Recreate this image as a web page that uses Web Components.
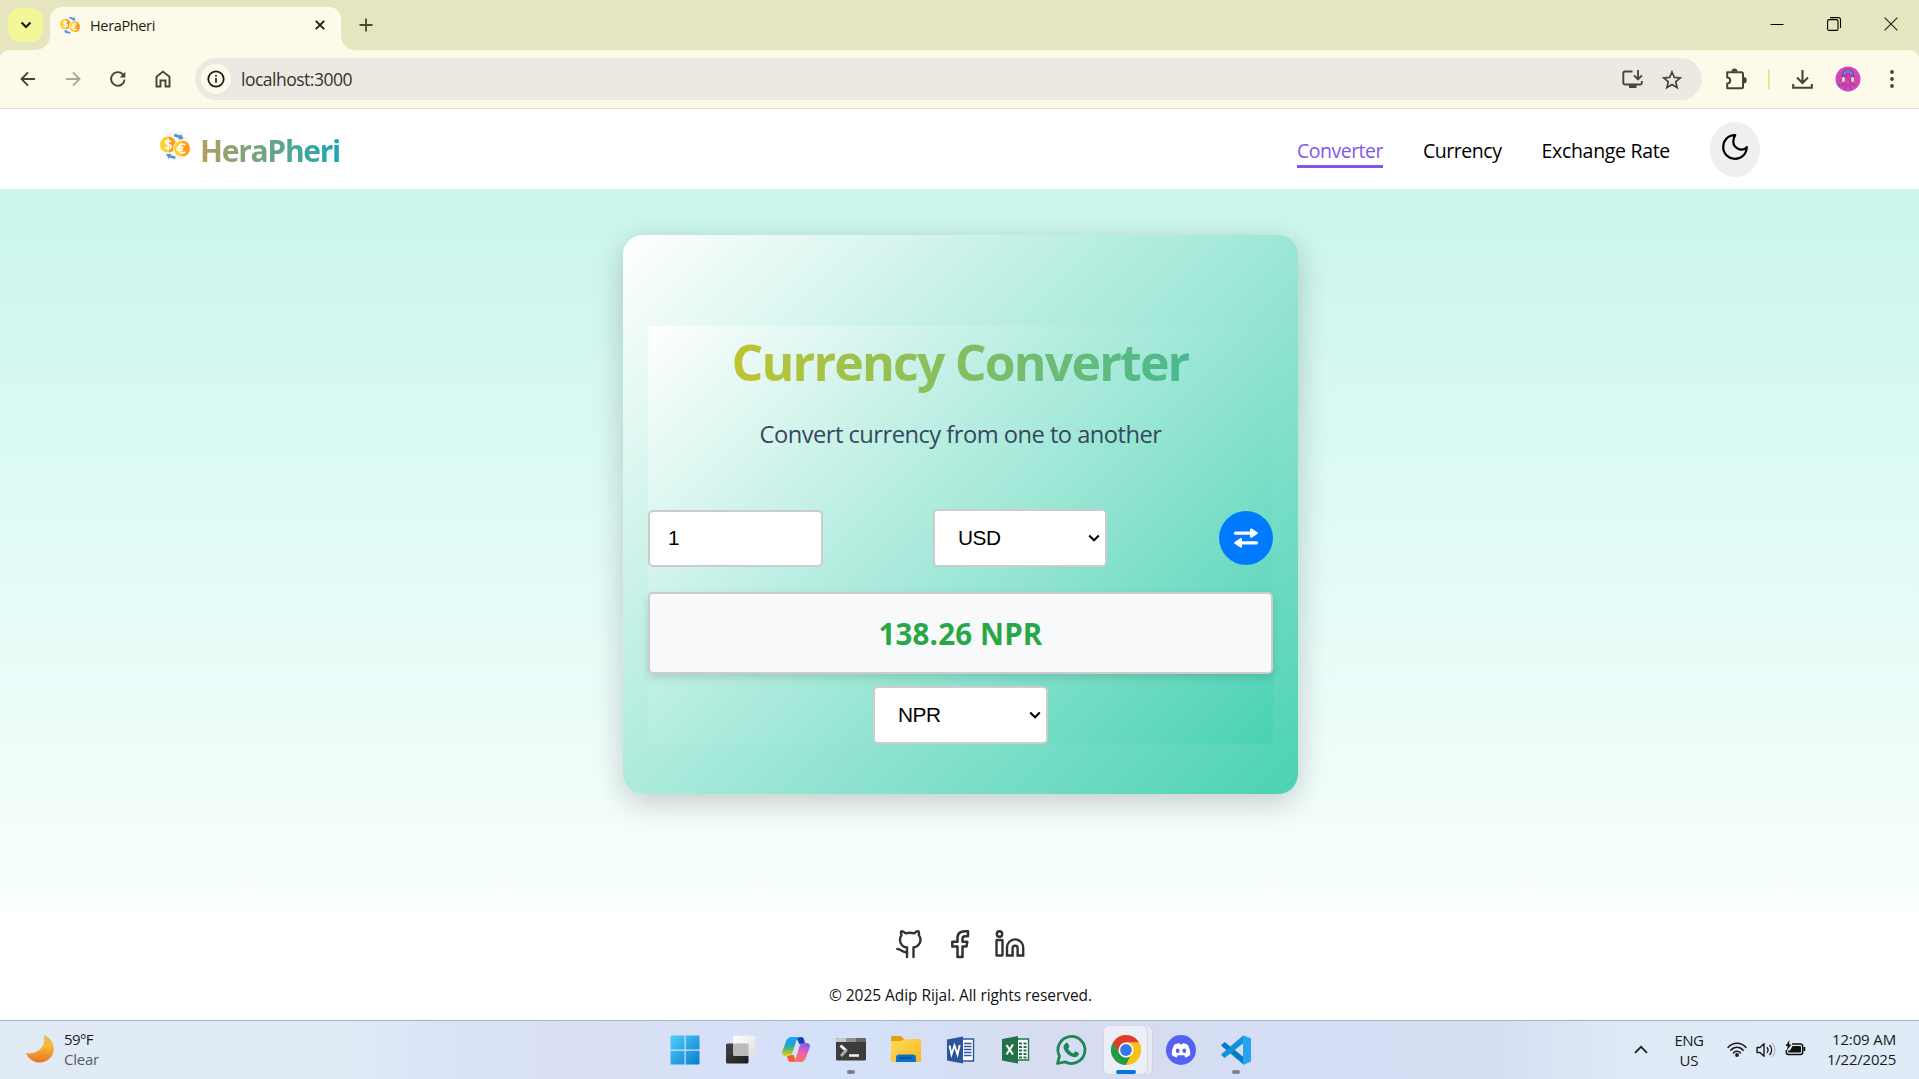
<!DOCTYPE html>
<html lang="en">
<head>
<meta charset="utf-8">
<title>HeraPheri</title>
<style>
html,body{margin:0;height:100%;overflow:hidden}
body{font-family:"Open Sans","Noto Sans",sans-serif;color:#000;background:#fff}
</style>
</head>
<body>
<app-desktop></app-desktop>
<script>
const COINS = `<defs><linearGradient id="a" x1="0" x2="1"><stop offset=".45" stop-color="#ffd12e"/><stop offset=".6" stop-color="#ff9c12"/></linearGradient></defs>
<circle cx="15" cy="15" r="15" fill="#f6f6f6"/>
<path d="M14.500 2.800l6 1.600.4-1.600 2.600 5-5 .9.5-1.800-5-1.500z" fill="#4f93d2"/><path d="M15 28l-5.600-1.500-.4 1.500L6 23.200l5-.5-.4 1.600 5 1.300z" fill="#4f93d2"/>
<circle cx="8" cy="13.500" r="8" fill="url(#a)"/><circle cx="21.800" cy="17.500" r="8.600" fill="#fffbe8"/><circle cx="22" cy="17.500" r="8" fill="url(#a)"/>
<path d="M11 10.800C9.500 8.900 5.200 9.200 5.500 11.500c.3 2.300 5.500 1.300 5.500 4 0 2.500-4.500 2.600-6 .5M8.200 7.500v12" fill="none" stroke="#fff" stroke-width="1.700"/>
<path d="M25.500 14c-3.500-2.200-7 0-7 3.500s3.500 5.700 7 3.500M16.500 16.400h7M16.500 18.800h6.500" fill="none" stroke="#fff" stroke-width="1.700"/>`;
// name: [width, height, markup]
const ICONS = {
 coins:[30,30,COINS],
 down:[12,8,`<path d="M1.500 1.500L6 6l4.500-4.500" fill="none" stroke="#1d1d10" stroke-width="2.200"/>`],
 close:[10,10,`<path d="M.8.8l8.400 8.400M9.200.8L.8 9.200" fill="none" stroke="#1c1c12" stroke-width="1.900"/>`],
 plus:[14,14,`<path d="M7 .5v13M.5 7h13" fill="none" stroke="#4b4b2c" stroke-width="1.800"/>`],
 min:[14,14,`<path d="M.5 7.500h13" stroke="#000" fill="none"/>`],
 restore:[14,14,`<rect x=".6" y="2.600" width="10.400" height="10.800" rx="1.500" fill="none" stroke="#000" stroke-width="1.100"/><path d="M3 .6h8.500a2 2 0 0 1 2 2v8.500" fill="none" stroke="#000" stroke-width="1.100"/>`],
 wclose:[14,14,`<path d="M.6.6l12.800 12.800M13.400.6L.6 13.400" stroke="#222" stroke-width="1.200" fill="none"/>`],
 back:[16,16,`<path d="M15 8H1.800M8 1.300L1.500 8 8 14.700" fill="none" stroke="#45452c" stroke-width="1.900"/>`],
 fwd:[16,16,`<path d="M1 8h13.200M8 1.300L14.500 8 8 14.700" fill="none" stroke="#aaa895" stroke-width="1.900"/>`],
 reload:[16,16,`<path d="M14.600 8.500A6.800 6.800 0 1 1 12.800 3.300l1.500 1.800" fill="none" stroke="#45452c" stroke-width="1.900"/><path d="M15.300.8v5.600H9.700z" fill="#45452c"/>`],
 home:[16,18,`<path d="M1.500 6.800L8 1.600l6.500 5.200v9.700h-4V10.500h-5v6h-4z" fill="none" stroke="#45452c" stroke-width="1.900"/>`],
 info:[18,18,`<circle cx="9" cy="9" r="7.700" fill="none" stroke="#1d1d18" stroke-width="1.800"/><path d="M9 8v4.800M9 5v1.700" stroke="#1d1d18" stroke-width="1.700"/>`],
 install:[21,18,`<path d="M10.500 1.500H2.800a1.500 1.500 0 0 0-1.500 1.500v10a1.500 1.500 0 0 0 1.500 1.500h15.500a1.500 1.500 0 0 0 1.500-1.500v-2M16 0v8.500M12 5.300l4 4 4-4" fill="none" stroke="#474737" stroke-width="1.900"/><path d="M7 14.500h7.500V18H7z" fill="#474737"/>`],
 star:[20,19,`<path d="M10 2l2.300 5.400 5.900.5-4.500 3.900 1.400 5.800-5.100-3.100-5.100 3.100 1.400-5.800L1.800 7.900l5.900-.5z" fill="none" stroke="#474737" stroke-width="1.700"/>`],
 ext:[22,21,`<path d="M2.200 3.200h14.300a1.500 1.500 0 0 1 1.500 1.500v13a1.500 1.500 0 0 1-1.500 1.500H2.200v-4.800a3 3 0 0 0 0-6z" fill="none" stroke="#45452c" stroke-width="2" stroke-linejoin="round"/><path d="M6.500 2.500a3 3 0 0 1 6 0zM18.500 8v6.500a3.200 3.200 0 0 0 0-6.500z" fill="#45452c"/>`],
 dl:[21,21,`<path d="M10.500 1v12.500M5 8.500l5.500 5.500L16 8.500M1.200 15v3.800h18.600V15" fill="none" stroke="#45452c" stroke-width="2.100"/>`],
 avatar:[26,26,`<circle cx="13" cy="13" r="12.500" fill="#d047bd"/><path d="M7.500 12C6 1.500 20 1.500 18.500 12" fill="none" stroke="#4a4f9c" stroke-width="1.600"/><path d="M8.500 8.500C10 3.500 16 3.500 17.500 8.500" fill="none" stroke="#48a9c2" stroke-width="1.200"/><path d="M9.500 11c1-4 6-4 7 0l-1 6c2 3 3 1 5 3M10.500 17c-2 3-3 1-5 3M12 18l-2 5M14 18l2 5" fill="#c93caf" stroke="#873080" stroke-width=".8"/><rect x="7" y="11" width="2.800" height="5" rx="1.300" fill="#ead6a0"/><rect x="16.200" y="11" width="2.800" height="5" rx="1.300" fill="#ead6a0"/><circle cx="4" cy="19" r="1" fill="#3862c9"/><circle cx="20.500" cy="17" r="1" fill="#b76b28"/>`],
 dots:[4,18,`<g fill="#45452c"><circle cx="2" cy="2" r="1.900"/><circle cx="2" cy="9" r="1.900"/><circle cx="2" cy="16" r="1.900"/></g>`],
 moon:[28,28,`<path d="M14.200 2.200C6.500 2.200 2.200 8 2.200 14c0 7 5.400 11.800 11.800 11.800 6 0 11.400-4.300 11.800-11.600-1.500 1.800-3.500 2.600-5.600 2.400-5-.5-8.200-4-7.900-8.500.1-2.400.7-4.400 1.900-5.900z" fill="none" stroke="#000" stroke-width="2.200" stroke-linejoin="round"/>`],
 swap:[26,20,`<path d="M2.500 5.200h16M7.500 14.800h16" stroke="#fff" stroke-width="3.200" stroke-linecap="round"/><path d="M19 .8c-.8-.8-2 0-2 .8v7.200c0 1.200 1.300 1.500 2 .8l5.300-3.500c.7-.6.700-1.200 0-1.800zM7 10.400c.8-.8 2 0 2 .8v7.200c0 1.200-1.300 1.500-2 .8l-5.300-3.500c-.7-.6-.7-1.200 0-1.800z" fill="#fff"/>`],
 chev:[12,8,`<path d="M1.200 1.500L6 6.200l4.800-4.700" fill="none" stroke="#000" stroke-width="2.100"/>`],
 github:[26,28,`<g fill="none" stroke="#333" stroke-width="2.400" stroke-linecap="round" stroke-linejoin="round"><path d="M11 27v-9.500C7 17 4 14 4 10c0-2 .5-3.500 1.500-5C4.500 3 5 1.300 5.600 1.300c2 0 3.600 1.700 4 2 2.600-.7 6-.7 8.600 0 .4-.3 2-2 4-2C23 1.300 23.200 3.500 22.800 5c1.300 1.500 1.700 3 1.700 5 0 4-3.500 7-7 7.500V27"/><path d="M11 22.200H9.500C7 22.200 5.800 19.800 1.300 18.900"/></g>`],
 fb:[18,28,`<path d="M11.500 27V16.500h4l.8-4.700h-4.800V9c0-2 .8-2.800 2.500-2.800H17V1.200c-5.500-.3-10.500.6-10.500 6.500v4.100H1.300v4.700h5.200V27z" fill="none" stroke="#333" stroke-width="2.500" stroke-linejoin="round"/>`],
 li:[29,28,`<g fill="none" stroke="#333" stroke-width="2.400"><circle cx="4.500" cy="4" r="2.700"/><rect x="1.500" y="10" width="6" height="15.500" rx=".5"/><path d="M12 25.500V17.500a8.100 8.100 0 0 1 16.200 0v8h-5.600v-7.300a2.500 2.500 0 0 0-5 0v7.300z"/></g>`],
 weather:[30,30,`<defs><linearGradient id="m" x1="0" y1="0" x2="0" y2="1"><stop stop-color="#eeb75c"/><stop offset=".4" stop-color="#f2bb38"/><stop offset="1" stop-color="#e8731f"/></linearGradient></defs><path d="M18.500.8C32 6 32 23 20 27.600 12 30.500 4 26.500.8 19 12.500 21.500 22 12 18.500.8z" fill="url(#m)"/>`],
 win:[30,30,`<defs><linearGradient id="w" gradientUnits="userSpaceOnUse" x1="0" y1="0" x2="30" y2="30"><stop stop-color="#4fd1fb"/><stop offset="1" stop-color="#087bd0"/></linearGradient></defs><path d="M1.500.5H14.500v14H.5v-13zM15.700.5H28.500a1 1 0 0 1 1 1v13H15.700zM.5 15.700h14v13.800h-13a1 1 0 0 1-1-1zM15.700 15.700h13.800v12.800a1 1 0 0 1-1 1H15.700z" fill="url(#w)"/>`],
 task:[30,30,`<defs><linearGradient id="t" x1="0" y1="0" x2="1" y2="1"><stop stop-color="#444"/><stop offset="1" stop-color="#1d1d1d"/></linearGradient><linearGradient id="t2" x1="0" y1="0" x2="1" y2="1"><stop stop-color="#fff"/><stop offset="1" stop-color="#dedede"/></linearGradient></defs><rect y="8.500" width="22.500" height="20" rx="1.500" fill="url(#t)"/><rect x="7" y=".8" width="22.500" height="20" rx="1.500" fill="url(#t2)"/><path d="M7 8.500h15.500v12H8.500a1.500 1.500 0 0 1-1.500-1.500z" fill="#bbb"/>`],
 copilot:[30,30,`<defs><linearGradient id="c1" x1="0" y1="0" x2="0" y2="1"><stop stop-color="#1ba9f5"/><stop offset=".35" stop-color="#1a9ee0"/><stop offset=".65" stop-color="#53bd67"/><stop offset="1" stop-color="#f4cf22"/></linearGradient><linearGradient id="c2" x1=".5" y1="0" x2=".2" y2="1"><stop stop-color="#8c5be9"/><stop offset=".45" stop-color="#ef62b0"/><stop offset="1" stop-color="#ff7b4b"/></linearGradient></defs><path d="M15 2h5c2 0 2.600 1 3.200 3l1.200 4h-6z" fill="#1542b5"/><path d="M15 27h-5c-2 0-2.600-1-3.200-3l-1.200-4h7z" fill="#f1602f"/><path d="M21 2H10.500C7 2 5.500 4.500 4.500 8L1.300 16.500C.5 19.500 2 21 4.500 21h3c2.500 0 3.500-1.500 4.300-4.200L14.800 7C15.800 3.500 17.500 2 21 2z" fill="url(#c1)"/><path d="M9 27h10.500c3.500 0 5-2.500 6-6l3.200-8.500c.8-3-.7-4.500-3.200-4.500h-3c-2.500 0-3.500 1.500-4.300 4.200L15.200 22C14.200 25.500 12.500 27 9 27z" fill="url(#c2)"/>`],
 term:[30,30,`<rect y="3" width="30" height="22.500" rx="1.500" fill="#3c3c3c"/><path d="M0 7V4.500A1.500 1.500 0 0 1 1.500 3H10v4z" fill="#c9c9c9"/><path d="M10 3h10v4H10z" fill="#919191"/><path d="M20 3h8.500A1.500 1.500 0 0 1 30 4.500V7H20z" fill="#666"/><path d="M4.500 10.500l6 5.500" stroke="#f3f3f3" stroke-width="3"/><path d="M10.500 15l-5.500 6" stroke="#aaa" stroke-width="3"/><path d="M13 20.500h10" stroke="#eee" stroke-width="2.600"/>`],
 folder:[30,30,`<defs><linearGradient id="f" x1="0" y1="0" x2="1" y2="1"><stop stop-color="#ffd95e"/><stop offset="1" stop-color="#f9b91e"/></linearGradient></defs><path d="M0 2.500A1.500 1.500 0 0 1 1.500 1H10l3 3h15.500A1.500 1.500 0 0 1 30 5.500V12H0z" fill="#e3a008"/><path d="M0 6h10.500l2.500-2h15.500A1.500 1.500 0 0 1 30 5.500v20a1.500 1.500 0 0 1-1.500 1.500h-27A1.500 1.500 0 0 1 0 25.500z" fill="url(#f)"/><path d="M5 27v-4.500a3 3 0 0 1 3-3h14a3 3 0 0 1 3 3V27z" fill="#0b70c9"/><path d="M9 23h12" stroke="#0a4f92" stroke-width="1.500" stroke-linecap="round"/>`],
 word:[30,30,`<path d="M15 4h12.500v22H15z" fill="#fff" stroke="#2b579a" stroke-width="1.400"/><path d="M18 8.500h7.500M18 11.500h7.500M18 14.500h7.500M18 17.500h7.500M18 20.500h7.500" stroke="#2b579a" stroke-width="1.300"/><path d="M1 4.500L17 1.500v27L1 25.500z" fill="#2b579a"/><path d="M3.500 10.500l2 9 3-9 3 9 2.200-9.400" fill="none" stroke="#fff" stroke-width="1.900"/>`],
 excel:[30,30,`<path d="M15 4h12.500v21H15z" fill="#fff" stroke="#217346" stroke-width="1.400"/><path d="M18 7.500h3v2h-3zM18 11h3v2h-3zM18 14.500h3v2h-3zM18 18h3v2h-3zM18 21.500h3v2h-3zM22.500 7.500h3v2h-3zM22.500 11h3v2h-3zM22.500 14.500h3v2h-3zM22.500 18h3v2h-3zM22.500 21.500h3v2h-3z" fill="#217346"/><path d="M1 4l16-3v27.500L1 25.500z" fill="#217346"/><path d="M5.500 10l6.500 9.500M12 9.500L5.500 19.500" stroke="#fff" stroke-width="2.100"/>`],
 wa:[30,30,`<path d="M1.500 28.500l2-7.300A13.500 13.500 0 1 1 9 26.800z" fill="none" stroke="#1b8755" stroke-width="2.800" stroke-linejoin="round"/><path d="M9.800 8.200c1-.7 2-.5 2.500.6l1 2.500c.3.800-.8 1.700-1.200 2.400 1.200 2.200 2.800 3.700 5.200 4.700l1.700-2c.4-.3 3.200 1.200 3.800 1.700.3 3.500-3 4.500-5.200 4-5-1.200-8.700-4.800-10-9-.5-2 .5-3.900 2.200-4.900z" fill="#1b8755"/>`],
 chrome:[30,30,`<circle cx="15" cy="15" r="15" fill="#fbc116"/><path d="M2 7.500A15 15 0 0 1 28 7.500H15L8.500 18.800z" fill="#e33b2e"/><path d="M2 7.500l6.500 11.300A7.500 7.500 0 0 0 15 22.500l4-1L15 30A15 15 0 0 1 2 7.500z" fill="#229b4a"/><path d="M15 7.500h13A15 15 0 0 1 15 30l6.500-11.300z" fill="#fbc116"/><circle cx="15" cy="15" r="7.500" fill="#fff"/><circle cx="15" cy="15" r="5.900" fill="#3579e9"/>`],
 discord:[30,30,`<circle cx="15" cy="15" r="15" fill="#5562f1"/><path d="M8.500 9.500L13 8l.8 1.300h2.400L17 8l4.500 1.500c2.300 3.500 3 7.200 2.700 10.600-1.500 1.200-3 1.800-4.800 2.300l-1.200-2.100h-6.400l-1.200 2.100C8.800 21.900 7.300 21.300 5.800 20.100 5.500 16.300 6.500 12.700 8.500 9.500z" fill="#fff"/><ellipse cx="11.700" cy="15.800" rx="1.900" ry="2.200" fill="#5562f1"/><ellipse cx="18.300" cy="15.800" rx="1.900" ry="2.200" fill="#5562f1"/>`],
 vscode:[30,30,`<path d="M.8 9.500l2-1.800c.5-.5 1-.4 1.500-.1L22.500 22v7.500L.8 11.300c-.6-.6-.6-1.200 0-1.800z" fill="#0a7ac4"/><path d="M.8 20.500l2 1.800c.5.500 1 .4 1.500.1L22.500 8V.3L.8 18.700c-.6.600-.6 1.200 0 1.800z" fill="#1191d8"/><path d="M22 .3l7 2.700c.7.300 1 .7 1 1.400v21.200c0 .7-.3 1.100-1 1.400l-7 2.900z" fill="#27a2f1"/>`],
 up:[14,9,`<path d="M1 7.800l6-6 6 6" fill="none" stroke="#1b1b1b" stroke-width="1.700"/>`],
 wifi:[20,15,`<g fill="none" stroke="#1b1b1b" stroke-width="1.500" stroke-linecap="round"><path d="M1 5.500C6-.3 14-.3 19 5.500M3.800 8.300c3.500-4 8.900-4 12.400 0M6.500 11c2-2.300 5-2.300 7 0"/></g><circle cx="10" cy="13" r="1.900" fill="#1b1b1b"/>`],
 vol:[20,16,`<path d="M1 5.500h3L8 1.800v12.400l-4-3.700H1z" fill="none" stroke="#1b1b1b" stroke-width="1.400" stroke-linejoin="round"/><path d="M10.800 5.200c1.500 1.600 1.500 4 0 5.600M13.500 3c2.800 2.800 2.800 7.200 0 10" fill="none" stroke="#1b1b1b" stroke-width="1.300"/><path d="M16 1c3.900 4 3.900 10 0 14" fill="none" stroke="#b2bac4" stroke-width="1.300"/>`],
 batt:[21,16,`<path d="M7 4h8.500a2.200 2.200 0 0 1 2.200 2.200v6a2.200 2.200 0 0 1-2.200 2.200h-12a2.200 2.200 0 0 1-2.200-2.200V10" fill="none" stroke="#111" stroke-width="1.500"/><path d="M7.500 6H15a1 1 0 0 1 1 1v4.500a1 1 0 0 1-1 1H4a1 1 0 0 1-1-1V10.500h2zM18.500 7h1.800v4h-1.800z" fill="#111"/><path d="M4.500 0L.5 6h2.200l-1 4.500L6.500 4.500H4z" fill="#111"/>`]
};

function define(tag, css, html, after){
  const t = document.createElement('template');
  t.innerHTML = `<style>*{box-sizing:border-box}${css}</style>${html}`;
  customElements.define(tag, class extends HTMLElement{
    connectedCallback(){
      if(this.shadowRoot) return;
      const r = this.attachShadow({mode:'open'});
      r.appendChild(t.content.cloneNode(true));
      if(after) after(this, r);
    }
  });
}

define('ui-icon', ':host{display:block;flex:none}svg{display:block;overflow:visible}', '<svg></svg>', (el, r)=>{
  const [w,h,m] = ICONS[el.getAttribute('name')];
  const width = +(el.getAttribute('size') || w);
  const s = r.querySelector('svg');
  s.setAttribute('viewBox', `0 0 ${w} ${h}`);
  s.setAttribute('width', width);
  s.setAttribute('height', width*h/w);
  s.innerHTML = m;
});

// One line of text whose tracking is tuned so that it spans the given width.
define('fit-text', ':host{display:block;flex:none;white-space:nowrap}span{display:inline-block}', '<span></span>', (el, r)=>{
  const s = r.querySelector('span'), w = +el.getAttribute('width'), t = el.getAttribute('text');
  s.textContent = t;
  const natural = s.getBoundingClientRect().width;
  if(t.length > 1) s.style.letterSpacing = (w - natural)/(t.length) + 'px';
  el.style.width = w + 'px';
});

define('browser-tabs', `
:host{display:flex;height:50px;background:#e5e5bf;padding-left:8px;align-items:flex-start;flex:none}
.menu{width:35px;height:34px;margin-top:8px;border-radius:12px;background:#f3f797;display:grid;place-items:center}
.tab{position:relative;margin-left:7px;width:291px;height:43px;margin-top:7px;background:#fefaea;border-radius:12px 12px 0 0;display:flex;align-items:center;padding:0 16px 7px 10px}
.tab::before,.tab::after{content:"";position:absolute;bottom:0;width:14px;height:14px}
.tab::before{left:-14px;background:radial-gradient(circle at 0 0,transparent 13.500px,#fefaea 14px)}
.tab::after{right:-14px;background:radial-gradient(circle at 100% 0,transparent 13.500px,#fefaea 14px)}
fit-text{margin-left:10px;font-size:14.500px;color:#1d1d14;flex:1}
.new{margin:18px 0 0 18px}.ctl{margin:17px 21px 0 auto;display:flex;gap:43px}`,
`<div class="menu"><ui-icon name="down"></ui-icon></div>
<div class="tab"><ui-icon name="coins" size="20"></ui-icon><fit-text text="HeraPheri" width="65"></fit-text><ui-icon name="close" style="margin-left:auto"></ui-icon></div>
<ui-icon class="new" name="plus"></ui-icon>
<div class="ctl"><ui-icon name="min"></ui-icon><ui-icon name="restore"></ui-icon><ui-icon name="wclose"></ui-icon></div>`);

define('browser-toolbar', `
:host{display:block;background:#e5e5bf;flex:none}
.bar{height:59px;border-bottom:1px solid #e2e0cc;background:#fefaea;border-radius:9px 9px 0 0;display:flex;align-items:center;padding:0 25px 0 20px}
.nav{display:flex;align-items:center;gap:29px}
.url{margin-left:24px;width:1507px;height:42px;border-radius:21px;background:#ece9e3;display:flex;align-items:center;padding:0 20px 0 6px}
.i{width:30px;height:30px;border-radius:50%;background:#fefaea;display:grid;place-items:center}
fit-text{margin-left:10px;font-size:17.500px;color:#33332c}
.r{margin-left:auto;display:flex;gap:19px;align-items:center}
.s{width:2px;height:20px;background:#e3e88e;margin-left:21px}`,
`<div class="bar"><div class="nav"><ui-icon name="back"></ui-icon><ui-icon name="fwd"></ui-icon><ui-icon name="reload"></ui-icon><ui-icon name="home"></ui-icon></div>
<div class="url"><div class="i"><ui-icon name="info"></ui-icon></div><fit-text text="localhost:3000" width="111"></fit-text><div class="r"><ui-icon name="install"></ui-icon><ui-icon name="star"></ui-icon></div></div>
<ui-icon name="ext" style="margin-left:23px"></ui-icon><div class="s"></div><ui-icon name="dl" style="margin-left:22px"></ui-icon><ui-icon name="avatar" style="margin-left:22px"></ui-icon><ui-icon name="dots" style="margin-left:auto;margin-right:0"></ui-icon></div>`);

define('site-header', `
:host{display:flex;height:80px;background:#fff;padding:0 159px 0 160px;align-items:center;flex:none}
.logo{display:flex;align-items:center}.logo ui-icon{margin-top:-6px}
.brand{margin-left:10px;font-weight:700;font-size:30px;line-height:40px;margin-top:4px;background:linear-gradient(90deg,#b5a05e,#1ba7b1);-webkit-background-clip:text;color:transparent}
nav{margin-left:auto;display:flex;gap:40px;font-size:19.500px;align-items:center}
nav fit-text{height:33px;line-height:32px;margin-top:4px;border-bottom:3px solid transparent}
.on{color:#8157f0;border-color:#8157f0!important;border-radius:0}
.t{width:50px;height:55px;border-radius:50%;background:#efefef;display:flex;justify-content:center;padding-top:11px}`,
`<div class="logo"><ui-icon name="coins"></ui-icon><fit-text class="brand" text="HeraPheri" width="140"></fit-text></div>
<nav><fit-text class="on" text="Converter" width="86"></fit-text><fit-text text="Currency" width="78.500"></fit-text><fit-text text="Exchange Rate" width="128.500"></fit-text><div class="t"><ui-icon name="moon"></ui-icon></div></nav>`);

define('currency-select', `
:host{display:flex;width:174px;height:58px;border:2px solid #ccc;border-radius:5px;background:#fff;align-items:center;justify-content:space-between;padding:0 5px 0 23px;font:20.800px "Liberation Sans",Arial,sans-serif;letter-spacing:-.4px}`,
`<slot></slot><ui-icon name="chev"></ui-icon>`);

define('converter-card', `
:host{display:block;width:675px;height:559px;padding:91px 25px 50px;border-radius:20px;background:linear-gradient(135deg,#fff,#4ad2b3);box-shadow:0 8px 32px rgba(0,0,0,.2)}
.in{height:418px;background:linear-gradient(135deg,#fff,#4ad2b3);display:flex;flex-direction:column;align-items:center}
h1{margin:0;padding-top:5px;font-size:50px;line-height:62px;height:66px}
h1 fit-text{background:linear-gradient(90deg,#bfc431,#49b892);-webkit-background-clip:text;color:transparent}
.sub{margin-top:26px;font-size:23.700px;line-height:32px;color:#34495e}
.row{align-self:stretch;display:flex;align-items:center;justify-content:space-between;margin-top:59px;height:58px}
.amt{width:175px;height:57px;margin-top:1px;border:2px solid #ccc;border-radius:5px;background:#fff;padding-left:18px;font:20.800px/51px "Liberation Sans",Arial,sans-serif}
.sw{width:54px;height:54px;border-radius:50%;background:#007bff;display:grid;place-items:center}
.res{align-self:stretch;height:82px;margin:25px 0 12px;border:2px solid #ccc;border-radius:5px;background:#f8f9fb;display:flex;align-items:center;justify-content:center;padding-top:2px;font-weight:700;font-size:29.500px;line-height:40px;color:#28a745;box-shadow:0 4px 8px rgba(0,0,0,.12)}`,
`<div class="in"><h1><fit-text text="Currency Converter" width="457" style="margin-right:1px"></fit-text></h1><fit-text class="sub" text="Convert currency from one to another" width="402"></fit-text>
<div class="row"><div class="amt">1</div><currency-select style="margin-right:2px">USD</currency-select><div class="sw"><ui-icon name="swap"></ui-icon></div></div>
<div class="res"><fit-text text="138.26 NPR" width="164"></fit-text></div><currency-select style="width:175px">NPR</currency-select></div>`);

define('site-footer', `
:host{display:flex;flex-direction:column;align-items:center;height:106px;background:#fff;padding:16px 0 0 2px;flex:none}
.s{display:flex;gap:29px;height:28px}fit-text{margin-top:27px;font-size:15.500px;line-height:20px;color:#111}`,
`<div class="s"><ui-icon name="github"></ui-icon><ui-icon name="fb"></ui-icon><ui-icon name="li" style="margin:0 1px 0 -3px"></ui-icon></div><fit-text text="© 2025 Adip Rijal. All rights reserved." width="263"></fit-text>`);

define('task-bar', `
:host{display:grid;grid-template-columns:1fr auto 1fr;height:59px;border-top:1px solid #aab1bb;background:linear-gradient(90deg,#e0ebf5 0,#e1ebf6 18%,#dae5f8 22%,#d9dff4 30%,#d4e1f8 45%,#d7dcf0 55%,#d4def5 67%,#d4dff3 78%,#dfeaf7 85%,#e0ebf8 100%);flex:none;font-size:15px;color:#1b1b1b}
.w{display:flex;padding:13px 0 0 25px}.w>div{margin:-5px 0 0 9px}fit-text{line-height:20px}
.apps{display:flex;gap:4px;padding:5px 0 0 2px}
.a{width:51px;height:48px;display:flex;flex-direction:column;align-items:center;padding-top:9px;position:relative}
.a:first-child ui-icon{margin-left:-1px}
.a i{position:absolute;bottom:0;width:8px;height:4px;border-radius:2px;background:#7d838d}
.a.on{width:43px;margin:0 4px;border-radius:5px;background:#edeff8;box-shadow:0 0 0 1px #d3d5e1,5px 0 0 #e7e9f4,6px 0 0 #cfd2df}
.a.on i{width:20px;background:#0078d4}
.tray{display:flex;justify-content:flex-end;padding:8px 23px 0 0}
.tray>ui-icon{margin-top:10px}.l{width:28px;margin:1px 24px 0 27px;display:flex;flex-direction:column;align-items:center}
.c{margin-left:21px;width:69px;display:flex;flex-direction:column;align-items:flex-end}`,
`<div class="w"><ui-icon name="weather"></ui-icon><div><fit-text text="59°F" width="29"></fit-text><fit-text text="Clear" width="35" style="color:#555d66"></fit-text></div></div>
<div class="apps"></div>
<div class="tray"><ui-icon name="up" style="margin-top:16px"></ui-icon><div class="l"><fit-text text="ENG" width="29"></fit-text><fit-text text="US" width="19"></fit-text></div><ui-icon name="wifi" style="margin-top:13px"></ui-icon><ui-icon name="vol" style="margin:13px 9px 0 9px"></ui-icon><ui-icon name="batt" style="margin-top:11px"></ui-icon><div class="c"><fit-text text="12:09 AM" width="64"></fit-text><fit-text text="1/22/2025" width="69"></fit-text></div></div>`,
(el,r)=>{
  r.querySelector('.apps').innerHTML = ['win','task','copilot','term','folder','word','excel','wa','chrome','discord','vscode'].map(n=>
   `<div class="a${n==='chrome'?' on':''}"><ui-icon name="${n}"></ui-icon>${['term','chrome','vscode'].includes(n)?'<i></i>':''}</div>`).join('');
});

define('app-desktop', `
:host{display:flex;flex-direction:column;width:1919px;height:1079px;overflow:hidden}
main{flex:1;display:flex;justify-content:center;align-items:flex-start;padding:46px 0 0 2px;background:linear-gradient(#caf6ed,#f9fffe)}`,
`<browser-tabs></browser-tabs><browser-toolbar></browser-toolbar><site-header></site-header><main><converter-card></converter-card></main><site-footer></site-footer><task-bar></task-bar>`);
</script>
</body>
</html>
